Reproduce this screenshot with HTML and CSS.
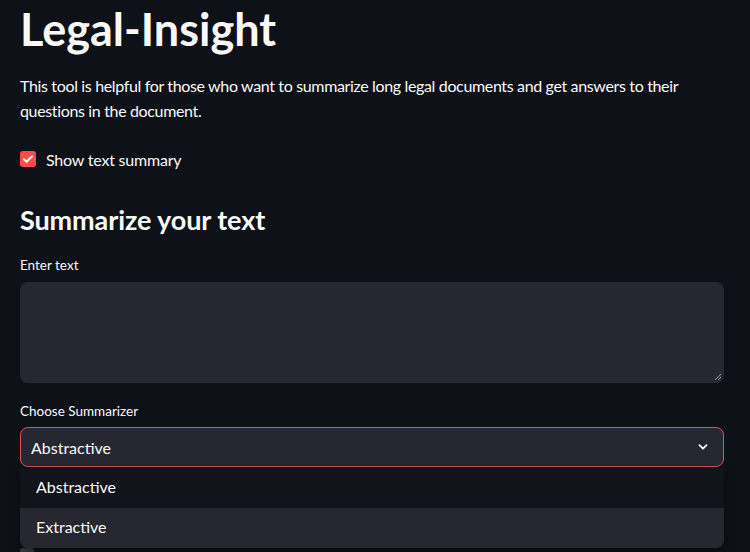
FILE: index.html
```html
<!DOCTYPE html>
<html>
<head>
<meta charset="utf-8">
<link rel="stylesheet" href="styles.css">
</head>
<body>
<main class="main">
  <h1 class="title">Legal-Insight</h1>
  <p class="intro">This tool is helpful for those who want to summarize long legal documents and get answers to their questions in the document.</p>
  <label class="check">
    <span class="box"><svg viewBox="0 0 16 16" width="16" height="16"><path d="M4 8.3l2.6 2.5L12 5.4" fill="none" stroke="#fff" stroke-width="2" stroke-linecap="round" stroke-linejoin="round"/></svg></span>
    <span>Show text summary</span>
  </label>
  <h2 class="subtitle">Summarize your text</h2>
  <div class="field">
    <div class="label">Enter text</div>
    <div class="textarea"><svg class="grip" viewBox="0 0 8 8" width="8" height="8"><path d="M7 1L1 7M7 4L4 7" stroke="#bbb" stroke-width="0.8"/></svg></div>
  </div>
  <div class="field select-field">
    <div class="label">Choose Summarizer</div>
    <div class="select-wrap">
      <div class="select">
        <span>Abstractive</span>
        <svg viewBox="0 0 12 12" width="12" height="12"><path d="M2.5 4.2L6 7.6l3.5-3.4" fill="none" stroke="#fafafa" stroke-width="1.8" stroke-linecap="round" stroke-linejoin="round"/></svg>
      </div>
      <ul class="menu">
        <li class="item">Abstractive</li>
        <li class="item active">Extractive</li>
      </ul>
    </div>
    <div class="hidden-box"></div>
  </div>
</main>
</body>
</html>
```

FILE: styles.css
```css
html, body {
  margin: 0;
  padding: 0;
  background: #0e1117;
  color: #fafafa;
  font-family: "Source Sans Pro", Lato, "Noto Sans", sans-serif;
  height: 552px;
  overflow: hidden;
}
.main {
  padding: 0 26px 0 20px;
  display: flex;
  flex-direction: column;
}
.title {
  font-size: 45px;
  font-weight: 700;
  margin: 0;
  line-height: 62px;
  margin-top: -2px;
  letter-spacing: 0;
}
.intro {
  font-size: 16px;
  line-height: 25px;
  margin: 13px 0 0;
  letter-spacing: -0.35px;
}
.check {
  display: flex;
  align-items: center;
  gap: 10px;
  font-size: 16px;
  margin-top: 24px;
  height: 24px;
  letter-spacing: -0.2px;
}
.box {
  width: 16px;
  height: 16px;
  border-radius: 3px;
  background: #ff4b4b;
  display: flex;
}
.subtitle {
  font-size: 27px;
  font-weight: 700;
  margin: 29px 0 0;
  line-height: 40px;
  letter-spacing: -0.1px;
}
.field {
  display: flex;
  flex-direction: column;
}
.label {
  font-size: 13.5px;
  line-height: 20px;
  margin-top: 15px;
  margin-bottom: 7px;
}
.textarea {
  height: 101px;
  background: #262730;
  border-radius: 8px;
  position: relative;
}
.grip {
  position: absolute;
  right: 2px;
  bottom: 2px;
}
.select-field .label {
  margin-top: 18px;
  margin-bottom: 6px;
}
.select-wrap {
  position: relative;
}
.select {
  height: 38px;
  border: 1px solid #e0505a;
  border-radius: 8px;
  background: #262730;
  display: flex;
  align-items: center;
  justify-content: space-between;
  padding: 0 14px 0 10px;
  font-size: 16px;
}
.menu {
  position: absolute;
  left: 0;
  right: 0;
  top: calc(100% + 1px);
  margin: 0;
  padding: 0;
  list-style: none;
  border-radius: 0 0 8px 8px;
  overflow: hidden;
  box-shadow: 0 4px 12px rgba(0,0,0,0.4);
  z-index: 2;
}
.item {
  height: 40px;
  box-sizing: border-box;
  padding: 0 0 4px 16px;
  display: flex;
  align-items: center;
  font-size: 16px;
  background: #11141b;
}
.item.active {
  background: #262730;
}
.hidden-box {
  margin-top: 81px;
  width: 14px;
  height: 14px;
  border-radius: 3px;
  background: #3a3b44;
}
```
